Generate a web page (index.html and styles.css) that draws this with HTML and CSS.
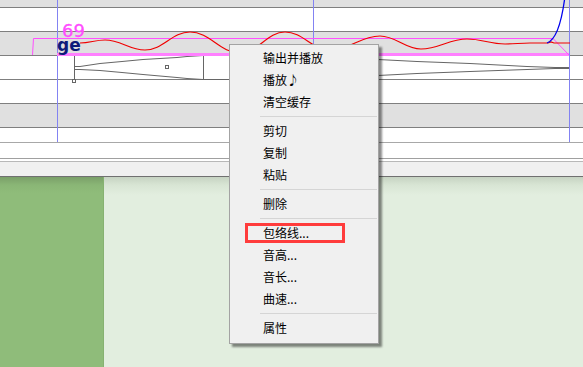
FILE: index.html
```html
<!DOCTYPE html>
<html>
<head>
<meta charset="utf-8">
<link rel="stylesheet" href="styles.css">
</head>
<body>
<div class="app">
  <div class="roll">
    <div class="row gray top"></div>
    <div class="row"></div>
    <div class="row gray"></div>
    <div class="row"></div>
    <div class="row"></div>
    <div class="row gray"></div>
    <div class="row last"></div>
    <svg class="roll-art" width="583" height="143" viewBox="0 0 583 143">
      <g stroke="#8383f2" stroke-width="1">
        <line x1="57.5" y1="0" x2="57.5" y2="142"/>
        <line x1="313.5" y1="0" x2="313.5" y2="142"/>
        <line x1="569.5" y1="0" x2="569.5" y2="142"/>
      </g>
      <g fill="none" stroke="#666" stroke-width="1">
        <line x1="74.5" y1="55" x2="74.5" y2="80"/>
        <line x1="203.5" y1="55" x2="203.5" y2="80"/>
        <polyline points="75,66.5 80,66.5 100,63.5 122,61.5 143,59.5 177,57.5 187,56.5 203,55.5 300,55.5 378,59.5 417,61.5 470,63.5 527,66.5 555,67.5 569,67.5"/>
        <polyline points="75,69.5 80,69.5 100,70.5 122,72.5 143,74.5 177,77.5 187,78.5 203,79.5 300,79.5 378,75.5 417,73.5 470,71.5 527,69.5 555,68.5 569,68.5"/>
        <rect x="72.5" y="79.5" width="3" height="3" fill="#fff"/>
        <rect x="165.5" y="65.5" width="3" height="3" fill="#fff"/>
      </g>
      <rect x="57" y="53" width="512" height="3" fill="#ff80ff"/>
      <polyline points="32.5,55 33.5,38.5 553,38.5 569,55" fill="none" stroke="#ff50ff" stroke-width="1"/>
      <path d="M80,43 C90,43 95,40 105,40 C121,40 129,50 145,50 C163,50 172,32 190,32 C210,32 220,53 240,53 C258,53 267,32 285,32 C303,32 312,50 330,50 C350,50 360,36 380,36 C396,36 405,49 421,49 C439,49 449,39 467,39 C482,39 490,44 505,44 C515,44 520,43 530,43 L548,43 L551,42 L554,43 L570,43" fill="none" stroke="#f00000" stroke-width="1.2"/>
      <path d="M547,43 C556,40 561,25 564.5,0" fill="none" stroke="#0000ee" stroke-width="1.3"/>
      <text x="62" y="37" class="lyric-num">69</text>
      <text x="57" y="51" class="lyric">ge</text>
    </svg>
  </div>
  <div class="strip">
    <div class="strip-a"></div>
    <div class="strip-b"></div>
    <div class="strip-c"></div>
  </div>
  <div class="bottom">
    <div class="side"></div>
    <div class="main"></div>
  </div>

  <div class="menu">
    <div class="item">输出并播放</div>
    <div class="item">播放♪</div>
    <div class="item">清空缓存</div>
    <div class="sep"></div>
    <div class="item">剪切</div>
    <div class="item">复制</div>
    <div class="item">粘贴</div>
    <div class="sep"></div>
    <div class="item">删除</div>
    <div class="sep"></div>
    <div class="item marked">包络线...<span class="mark"></span></div>
    <div class="item">音高...</div>
    <div class="item">音长...</div>
    <div class="item">曲速...</div>
    <div class="sep"></div>
    <div class="item">属性</div>
  </div>
</div>
</body>
</html>
```
FILE: styles.css
```css
html, body {
  margin: 0;
  padding: 0;
}
body {
  width: 583px;
  height: 367px;
  overflow: hidden;
  background: #e2eedf;
  font-family: "Noto Sans CJK SC", "Noto Sans", sans-serif;
}
.app {
  position: relative;
  width: 583px;
  height: 367px;
  display: flex;
  flex-direction: column;
}
.roll {
  position: relative;
  display: flex;
  flex-direction: column;
  background: #fff;
}
.row {
  height: 23px;
  border-bottom: 1px solid #7f7f7f;
  background: #fff;
}
.row.gray {
  background: #e0e0e0;
}
.row.top {
  height: 7px;
}
.row.last {
  height: 14px;
  border-bottom-color: #a8a8a8;
}
.roll-art {
  position: absolute;
  left: 0;
  top: 0;
}
.lyric-num {
  font-family: "DejaVu Sans", "Liberation Sans", sans-serif;
  font-size: 18px;
  fill: #ff4dff;
  stroke: #ff4dff;
  stroke-width: 0.3;
}
.lyric {
  font-family: "DejaVu Sans", "Liberation Sans", sans-serif;
  font-size: 17px;
  font-weight: bold;
  fill: #0d1a7a;
}
.strip {
  display: flex;
  flex-direction: column;
}
.strip-a {
  height: 15px;
  background: #fff;
  border-bottom: 1px solid #a0a0a0;
}
.strip-b {
  height: 2px;
  background: #fff;
  border-bottom: 1px solid #b8b8b8;
}
.strip-c {
  height: 14px;
  background: #f0f0f0;
  border-bottom: 1px solid #707070;
}
.bottom {
  flex: 1;
  display: flex;
}
.side {
  width: 103px;
  background: linear-gradient(#7a9f68 0px, #8ab676 8px, #8fbc7a 16px);
  border-right: 1px solid #86b271;
}
.main {
  flex: 1;
  background: linear-gradient(#c6d3c2 0px, #d8e5d4 8px, #e2eedf 18px);
}
.menu {
  position: absolute;
  left: 229px;
  top: 44px;
  width: 148px;
  height: 296px;
  padding-top: 2px;
  box-sizing: content-box;
  background: #f0f0f0;
  border: 1px solid #a3a3a3;
  box-shadow: 3px 3px 2px rgba(0, 0, 0, 0.45);
  font-size: 12px;
  color: #000;
}
.item {
  position: relative;
  height: 22px;
  line-height: 22px;
  padding-left: 33px;
  white-space: nowrap;
}
.sep {
  height: 7px;
  margin: 0 1px 0 30px;
  background: linear-gradient(transparent 3px, #d5d5d5 3px, #d5d5d5 4px, transparent 4px);
}
.mark {
  position: absolute;
  left: 15px;
  top: 1px;
  width: 94px;
  height: 14px;
  border: 3px solid #ff3c3c;
}
```
